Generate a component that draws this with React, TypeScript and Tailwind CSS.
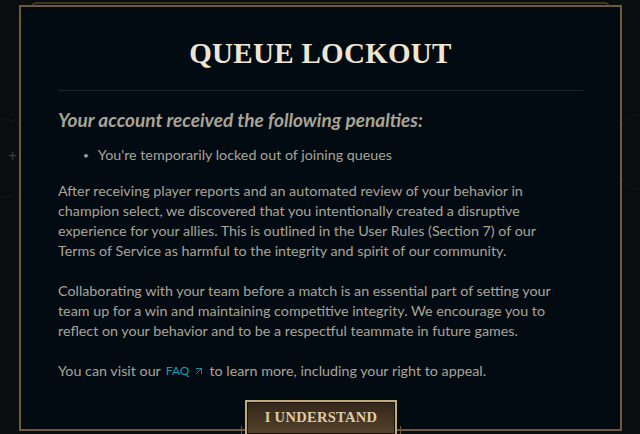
import { ArrowUpRight } from 'lucide-react'

const body = "font-['Lato','Noto_Sans',sans-serif]"
const serif = "font-['Liberation_Serif','DejaVu_Serif',serif]"

function Line({ children }: { children: React.ReactNode }) {
  return <span className="block whitespace-nowrap">{children}</span>
}

export default function App() {
  return (
    <div className="relative w-[640px] h-[434px] overflow-hidden bg-[#090d0e]">
      {/* faint client chrome peeking out behind the modal */}
      <div className="absolute left-[-40px] top-[118px] w-[80px] h-[80px] rounded-full border border-[#141919]" />
      <span className="absolute left-[8px] top-[148px] text-[16px] leading-none text-[#3b3f3c]">+</span>
      <div className="absolute right-[-50px] top-[112px] w-[80px] h-[80px] rounded-full border border-[#131818]" />

      <div className="pt-[5px] pl-[19px]">
        <div className="relative w-[603px] h-[426px] border-2 border-[#6d5b3b] bg-[#020a12]">
          {/* raised lip along the top edge */}
          <svg className="absolute left-[10px] top-[-5px]" width="579" height="5" viewBox="0 0 579 5">
            <polyline points="0,4 4,1 575,1 579,4" fill="none" stroke="#4f4430" strokeWidth="1.5" />
          </svg>

          <div className="px-[37px]">
            <h1 className={`${serif} pt-[28px] text-center text-[29px] leading-[36px] font-bold tracking-[0.3px] text-[#efe6d2]`}>
              QUEUE LOCKOUT
            </h1>
            <div className="mt-[19px] h-px bg-[#1d252c]" />

            <p className={`${body} mt-[18px] text-[19px] leading-[22px] font-bold italic text-[#a8a496]`}>
              Your account received the following penalties:
            </p>

            <ul className={`${body} mt-[14px] pl-[25px] text-[14.3px] leading-[20px] text-[#a9a597]`}>
              <li className="flex items-center gap-[9px]">
                <span className="text-[10px]">•</span>
                You're temporarily locked out of joining queues
              </li>
            </ul>

            <div className={`${body} mt-[16px] text-[14.3px] leading-[20px] text-[#a9a597] space-y-[20px]`}>
              <p>
                <Line>After receiving player reports and an automated review of your behavior in</Line>
                <Line>champion select, we discovered that you intentionally created a disruptive</Line>
                <Line>experience for your allies. This is outlined in the User Rules (Section 7) of our</Line>
                <Line>Terms of Service as harmful to the integrity and spirit of our community.</Line>
              </p>
              <p>
                <Line>Collaborating with your team before a match is an essential part of setting your</Line>
                <Line>team up for a win and maintaining competitive integrity. We encourage you to</Line>
                <Line>reflect on your behavior and to be a respectful teammate in future games.</Line>
              </p>
              <p className="flex items-center whitespace-nowrap">
                You can visit our
                <span className="ml-[5px] mr-[4px] inline-flex items-center gap-[4px] text-[12px] text-[#1b9bab]">
                  FAQ
                  <ArrowUpRight size={12} strokeWidth={1.8} />
                </span>
                to learn more, including your right to appeal.
              </p>
            </div>
          </div>
        </div>
      </div>

      {/* confirm button sitting on the bottom rim */}
      <div className="absolute left-[241px] top-[400px] flex items-end">
        <div className="w-[4px] h-[10px] border-l border-[#6d5b3b]" />
        <button
          className={`${serif} w-[152px] h-[36px] border-2 border-[#c2a97a] bg-gradient-to-b from-[#33261a] to-[#56432b] text-[14.5px] font-bold tracking-[0.3px] text-[#dccda8] shadow-[inset_0_0_0_1px_#1a140c]`}
        >
          I UNDERSTAND
        </button>
        <div className="w-[4px] h-[10px] border-r border-[#6d5b3b]" />
      </div>
    </div>
  )
}
